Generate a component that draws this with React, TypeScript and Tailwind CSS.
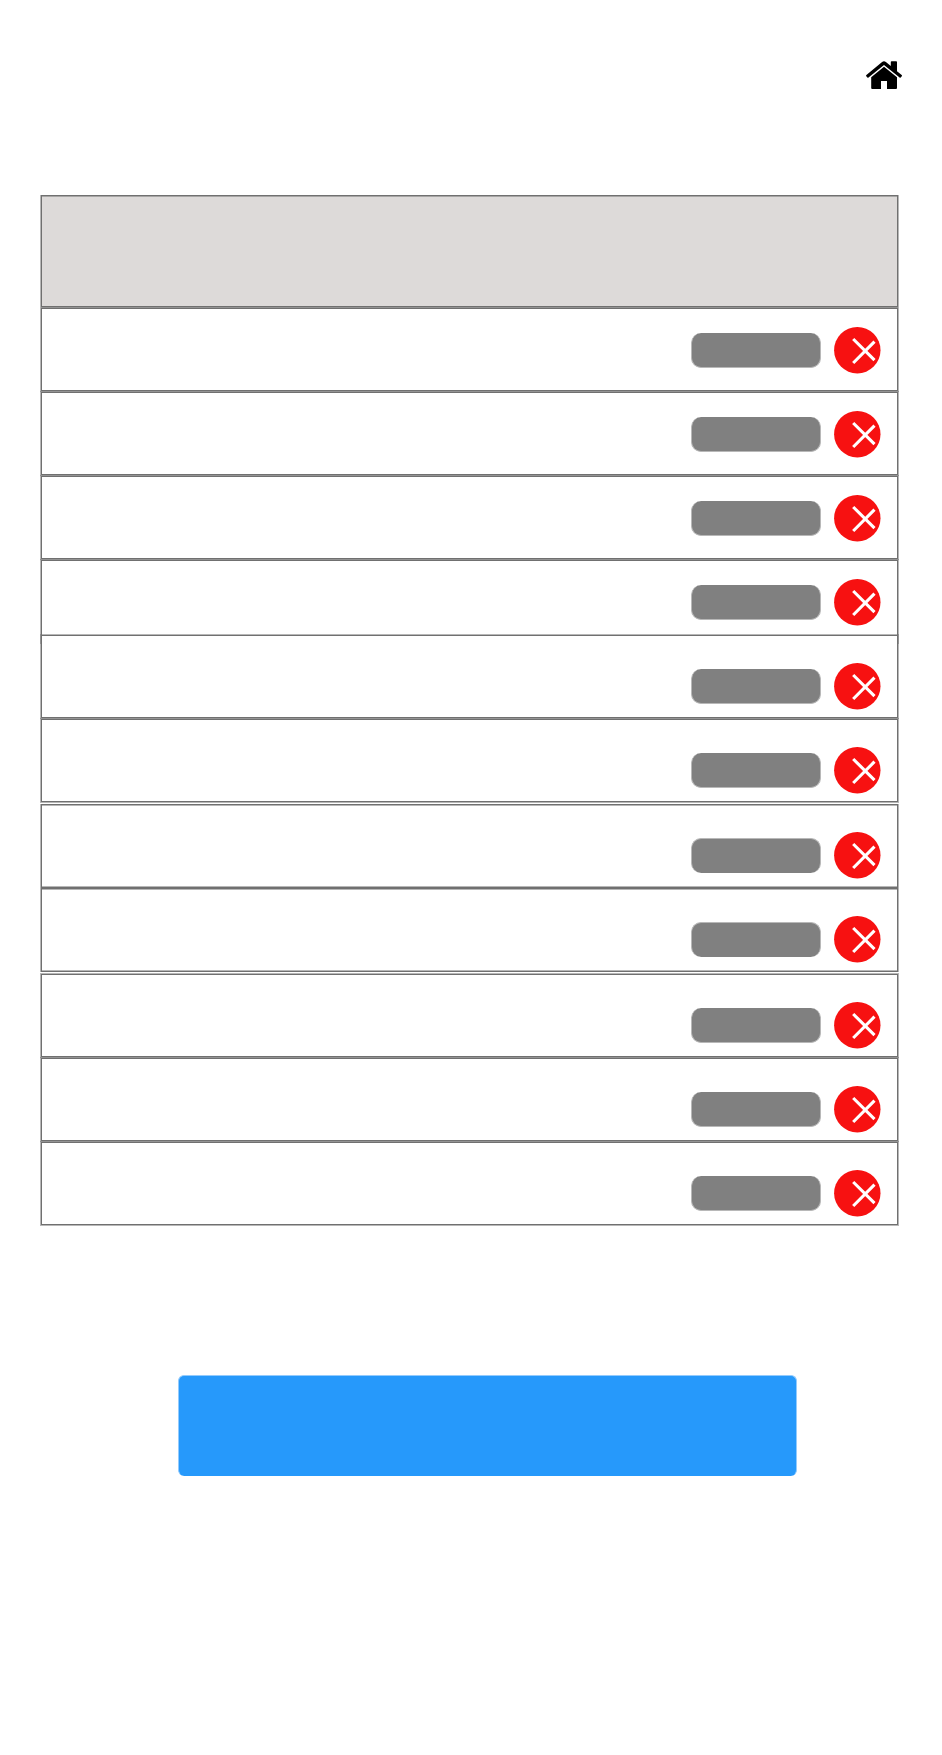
import React from "react";

type Kind = "normal" | "inner";

type Row = { id: number; kind: Kind; className: string };

const rows: Row[] = [
  { id: 1, kind: "normal", className: "pt-[18px]" },
  { id: 2, kind: "normal", className: "pt-[18px]" },
  { id: 3, kind: "normal", className: "pt-[18px]" },
  { id: 4, kind: "normal", className: "pt-[18px]" },
  { id: 5, kind: "normal", className: "pt-[27px] -mt-[9px]" },
  { id: 6, kind: "normal", className: "pt-[27px]" },
  { id: 7, kind: "inner", className: "pt-[27px] mt-px" },
  { id: 8, kind: "inner", className: "pt-[27px]" },
  { id: 9, kind: "normal", className: "pt-[27px] mt-0.5" },
  { id: 10, kind: "normal", className: "pt-[27px]" },
  { id: 11, kind: "normal", className: "pt-[27px]" },
];

const kinds: Record<Kind, string> = {
  normal: "mb-px h-[83px] shadow-[0_0_0_1px_#70707080]",
  inner:
    "h-[84px] shadow-[-1px_0_0_0_#70707080,1px_0_0_0_#70707080,inset_0_1px_0_0_#70707080,inset_0_-1px_0_0_#70707080]",
};

const bars: Record<Kind, string> = {
  normal: "border-x border-b",
  inner: "border-x border-t",
};

function HomeIcon() {
  return (
    <svg viewBox="0 0 36 28" className="h-7 w-9" fill="black" aria-hidden="true">
      <path d="M18 5.800 L31 16.300 V27 Q31 28 30 28 H21 V20 H15 V28 H6.200 Q5.200 28 5.200 27 V16.300 Z" />
      <path d="M0.400 14 L16.100 1 Q18 -0.500 19.900 1 L24.800 5 V1 Q24.800 0.200 25.600 0.200 H30.200 Q31 0.200 31 1 V10.200 L35.700 14 Q36.300 14.600 35.800 15.200 L34.700 16.500 Q34.200 17 33.600 16.500 L18 3.900 L2.500 16.500 Q1.900 17 1.400 16.500 L0.300 15.200 Q-0.200 14.600 0.400 14 Z" />
    </svg>
  );
}

function DeleteButton({ id }: { id: number }) {
  return (
    <button type="button" aria-label={`Delete item ${id}`} className="size-[47px] shrink-0 rounded-full">
      <svg viewBox="0 0 47 47" className="size-full" aria-hidden="true">
        <circle cx="23.3" cy="23.2" r="23.2" fill="#f71111" />
        <path d="M19.200 12 L40.500 33.200 M40.500 14.700 L19.200 36" stroke="white" strokeWidth="3.100" />
      </svg>
    </button>
  );
}

export default function App() {
  return (
    <main className="min-h-screen bg-white pb-20 font-['Liberation_Sans',sans-serif]">
      <header className="flex justify-end pt-[61px] pr-10">
        <a href="#home" aria-label="Home">
          <HomeIcon />
        </a>
      </header>

      <section aria-label="Items" className="mt-[106px] mr-11 ml-[41px]">
        <div className="mb-px h-28 border border-[#707070] bg-[#dddad9] shadow-[-1px_0_0_0_#70707080,1px_0_0_0_#70707080,0_1px_0_0_#70707080,inset_0_1px_0_0_#70707080]" />
        <ul className="flex flex-col">
          {rows.map((row) => (
            <li
              key={row.id}
              className={`flex items-start justify-end border border-[#707070] bg-white pr-4 ${kinds[row.kind]} ${row.className}`}
            >
              <div className="flex items-center gap-[13px]">
                <button
                  type="button"
                  aria-label={`Edit item ${row.id}`}
                  className={`h-[35px] w-[130px] rounded-[10px] border-[#b8b8b8] bg-[#808080] ${bars[row.kind]}`}
                />
                <DeleteButton id={row.id} />
              </div>
            </li>
          ))}
        </ul>
      </section>

      <div className="mt-[149px] mr-[145px] ml-[178px]">
        <button
          type="button"
          aria-label="Continue"
          className="block h-[101px] w-full rounded-md border-x border-t border-[#93cbfd] bg-[#2699fb]"
        />
      </div>
    </main>
  );
}
